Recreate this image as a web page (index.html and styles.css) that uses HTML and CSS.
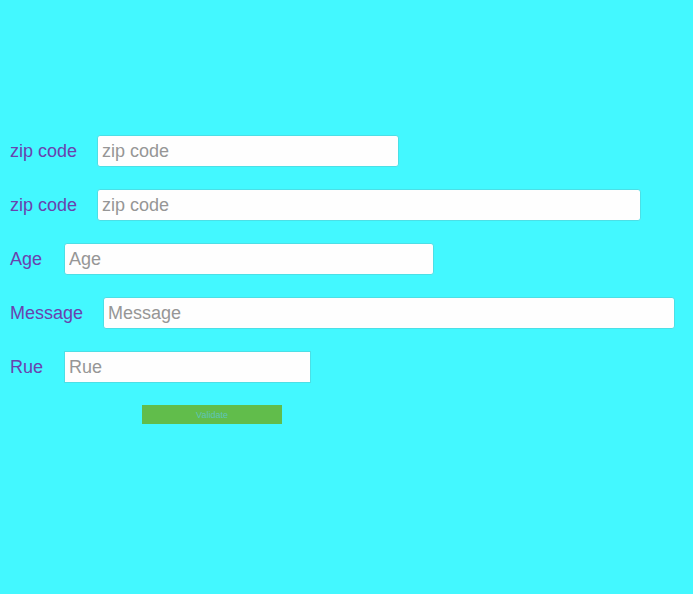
FILE: index.html
```html
<!DOCTYPE html>
<html lang="en">
<head>
<meta charset="utf-8">
<meta name="viewport" content="width=device-width, initial-scale=1">
<title>Form</title>
<link rel="stylesheet" href="styles.css">
</head>
<body>
<form class="form">
  <div class="row">
    <label class="label" for="zip">zip code</label>
    <input class="field field-zip" id="zip" type="text" placeholder="zip code">
  </div>
  <div class="row">
    <label class="label" for="zip-long">zip code</label>
    <input class="field field-zip-long" id="zip-long" type="text" placeholder="zip code">
  </div>
  <div class="row">
    <label class="label" for="age">Age</label>
    <input class="field field-age" id="age" type="text" placeholder="Age">
  </div>
  <div class="row">
    <label class="label" for="message">Message</label>
    <input class="field field-message" id="message" type="text" placeholder="Message">
  </div>
  <div class="row">
    <label class="label" for="rue">Rue</label>
    <input class="field field-rue" id="rue" type="text" placeholder="Rue">
  </div>
  <button class="submit" type="button">Validate</button>
</form>
</body>
</html>
```
FILE: styles.css
```css
* {
  box-sizing: border-box;
}

body {
  margin: 0;
  background: #43f8ff;
  font-family: "Liberation Sans Narrow", "Liberation Sans", Arial, sans-serif;
  font-size: 18px;
}

.form {
  display: flex;
  flex-direction: column;
  gap: 22px;
  padding: 135px 10px 20px;
}

.row {
  display: flex;
  align-items: center;
  gap: 20px;
}

.label {
  min-width: 34px;
  color: #6a42ae;
  line-height: 32px;
  white-space: nowrap;
}

.field {
  min-width: 0;
  height: 32px;
  padding: 0 4px;
  border: 1px solid #4cdfe6;
  border-radius: 3px;
  background: #fefefe;
  color: #333;
  font: inherit;
}

.field::placeholder {
  color: #969696;
  opacity: 1;
}

.field-zip {
  flex: 0 1 302px;
}

.field-zip-long {
  flex: 0 1 544px;
}

.field-age {
  flex: 0 1 370px;
}

.field-message {
  flex: 0 1 572px;
}

.field-rue {
  flex: 0 1 247px;
  border-radius: 0;
}

.submit {
  width: 140px;
  height: 19px;
  margin-left: 132px;
  padding: 0;
  border: 0;
  background: #61bd4b;
  color: #5fc4b8;
  font-family: inherit;
  font-size: 9px;
}
```
